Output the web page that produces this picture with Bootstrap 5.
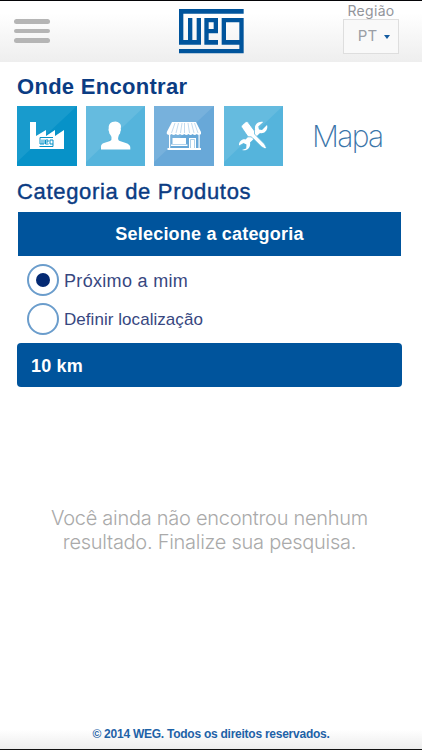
<!DOCTYPE html>
<html lang="pt">
<head>
<meta charset="utf-8">
<meta name="viewport" content="width=device-width, initial-scale=1">
<title>WEG - Onde Encontrar</title>
<link href="https://cdn.jsdelivr.net/npm/bootstrap@5.3.0/dist/css/bootstrap.min.css" rel="stylesheet">
<style>
body{font-family:"Liberation Sans",Arial,sans-serif;background:#fff;height:750px;overflow:hidden;color:#0b3c83}
.topbar{height:62px;border-top:1px solid #050508;background:linear-gradient(#fff 20%,#eee);padding:0 23px 0 14px}
.menu-btn{width:36px;margin-top:18px;gap:5px}
.menu-btn span{height:4.6px;border-radius:3px;background:#b5b5b5}
.brand{margin:8px 0 0 30px}
.region{width:56px;font-family:Inter,sans-serif;color:#92959b}
.region-label{font-size:14px;line-height:17px;margin-top:1px;letter-spacing:.3px;white-space:nowrap}
.region-box{width:56px;height:35px;border:1px solid #dedede;font-size:15px;background:#f9f9f9;color:#9a9ea5;gap:7px;padding-left:6px}
.caret{border:3px solid transparent;border-top:4px solid #145ba0;border-bottom:0}
.main-pane{padding:0 20px 0 17px}
.find-title{font-size:22px;line-height:26px;font-weight:700;margin:12px 0 6px;letter-spacing:.29px}
.tiles{height:60px}
.tiles svg{display:block}
.map-link{font-family:Inter,sans-serif;font-weight:200;font-size:30px;color:#3b75a9;letter-spacing:-1.7px;margin-left:29px;text-decoration:none}
.cat-title{font-size:22px;line-height:26px;margin:13px 0 7px;font-weight:400;-webkit-text-stroke:.4px #0b3c83;letter-spacing:.67px}
.cat-btn{height:44px;background:#00549c;color:#fff;font-size:18px;font-weight:700;border-radius:0;letter-spacing:.2px;margin-left:1px;width:383px}
.choices{margin:8px 0 0 10px}
.choice{height:32px;gap:5px;font-size:18px;color:#37477f}
.choice span:last-child{padding-top:2px}
.choice+.choice{margin-top:7px}
.near{letter-spacing:.32px}
.place{font-size:17px;letter-spacing:.05px}
.ring{width:32px;height:32px;border:2px solid #6b9dcc;flex:none}
.dot{width:14px;height:14px;background:#042a73}
.radius-btn{height:44px;margin-top:8px;border-radius:4px;background:#00549c;color:#fff;font-weight:700;font-size:18px;padding:2px 0 0 14px;letter-spacing:.2px}
.empty-msg{font-family:Inter,sans-serif;font-weight:300;font-size:20px;line-height:24px;color:#aaa;margin-top:119px;letter-spacing:-.27px}
.foot{height:33px;background:linear-gradient(#fff 40%,#ededed);border-bottom:1px solid #111;font-size:12px;font-weight:700;color:#1e62a7;letter-spacing:-.25px;padding-top:1px}
</style>
<script src="https://cdn.jsdelivr.net/npm/bootstrap@5.3.0/dist/js/bootstrap.bundle.min.js"></script>
</head>
<body class="d-flex flex-column">
<header class="topbar d-flex justify-content-between align-items-start">
  <button class="menu-btn btn p-0 border-0 d-flex flex-column" aria-label="Menu"><span class="w-100"></span><span class="w-100"></span><span class="w-100"></span></button>
  <a class="brand" href="#" aria-label="WEG">
    <svg class="d-block" width="65" height="45" viewBox="0 0 195 135" fill="#00549c"><path d="M0 0H194V14H13V93H27V27H40V93H53V27H66V107H0ZM76 27H117V73H89V93H117V107H76ZM89 40V60H104V40ZM128 27H194V133H0V120H181V107H128ZM141 40V93H181V40Z" fill-rule="evenodd"/></svg>
  </a>
  <div class="region d-flex flex-column align-items-center">
    <div class="region-label">Região</div>
    <div class="region-box d-flex align-items-center justify-content-center">PT<span class="caret"></span></div>
  </div>
</header>
<main class="main-pane flex-grow-1">
  <h1 class="find-title">Onde Encontrar</h1>
  <div class="tiles d-flex align-items-center">
    <svg width="266" height="60" viewBox="0 0 266 60">
      <g><path fill="#0792c8" d="M0 0h60v60H0z"/><path fill="#189bcd" d="M0 0h60L0 56z"/><path fill="#fff" d="M13 16h6v14l10-6v6l9-6v6l9-6v19H13z"/><g transform="translate(22.5 31)" stroke="#0792c8" fill="none"><path d="M13.500.5H.5V7H4.500V2.500M2.500 2.500V7M6 5H8.500V3H6V7H9M13.500 7H10.500V3H13.500V9.500H0"/></g></g>
      <g transform="translate(69)"><path fill="#55b4dc" d="M0 0h59v60H0z"/><path fill="#65bbdf" d="M0 0h59L0 56z"/><path fill="#fff" d="M15 43.500v-3q0-2.500 3-3.500l6-2q2-1 1.500-4l-1-2q-1.500-1.500-1.500-3.500-1-1.500-.3-3-.5-5 3.500-6.500 5-1.500 7 1 2.500 1.500 1.500 5.500.7 1.500-.3 3 0 2-1.500 3.500l-.6 2q-.8 3 1.500 4l6 2q4.500 1.500 4.500 4.500v2z"/></g>
      <g transform="translate(137)"><path fill="#68a8d8" d="M0 0h60v60H0z"/><path fill="#77b1dc" d="M0 0h60L0 56z"/><path fill="#fff" d="M18 16h24l5 10v2q-2 2-4.200 0-2 2-4.200 0-2 2-4.200 0-2 2-4.200 0-2 2-4.200 0-2 2-4.200 0-2 2-4.200 0-2 2-4.800 0v-2z"/><path stroke="#a9cce8" fill="none" stroke-width=".7" d="M21 17l-3.500 10m7-10-2.500 10m6-10-1.500 10m4-10v10m3.500-10 1.500 10m2-10 2.500 10m.5-10 3.500 10"/><path fill="#fff" d="M15 29h1.200v13H15zm29.500 0h1.200v13h-1.200zM13.500 42H47v2H13.500zM18.500 32h13.500v6H18.500zM17 38.500h16.500v1.500H17zM35 32h7v10h-7z"/><path stroke="#77b1dc" stroke-width=".6" fill="none" d="M36.500 42v-8.500h4V42"/></g>
      <g transform="translate(207)"><path fill="#55b4dc" d="M0 0h59v60H0z"/><path fill="#65bbdf" d="M0 0h59L0 56z"/><g fill="#fff"><path d="M43 19l-5 5-3-.6-.8-3 5-4.500c-5-1.300-9.500 3-8 8L21.500 33.500c-3.500-1-7 2.500-6.500 6l4.500-2.500 3 1.600-.3 4L18 44c5 1.500 9-2.500 8-7.500L36 27c4.500 1.300 8.500-3.500 7-8z"/><path stroke="#5cb8de" stroke-width=".8" d="M18 19l4-3.500q1.500-.2 2.500 1.300l6 8.200v3l1 1 9 9 1.800 3.500-1.300 1.300-3.500-2-9-9-1.500-1h-3L18 22q-1.500-1.500 0-3z"/></g></g>
    </svg>
    <a class="map-link" href="#">Mapa</a>
  </div>
  <h2 class="cat-title">Categoria de Produtos</h2>
  <button class="cat-btn btn border-0 p-0 d-block">Selecione a categoria</button>
  <div class="choices">
    <label class="choice d-flex align-items-center" role="radio" aria-checked="true"><span class="ring rounded-circle d-flex align-items-center justify-content-center"><span class="dot rounded-circle p-0"></span></span><span class="near">Próximo a mim</span></label>
    <label class="choice d-flex align-items-center" role="radio" aria-checked="false"><span class="ring rounded-circle"></span><span class="place">Definir localização</span></label>
  </div>
  <div class="radius-btn d-flex align-items-center">10 km</div>
  <p class="empty-msg text-center mb-0">Você ainda não encontrou nenhum<br>resultado. Finalize sua pesquisa.</p>
</main>
<footer class="foot d-flex align-items-center justify-content-center">© 2014 WEG. Todos os direitos reservados.</footer>
</body>
</html>
